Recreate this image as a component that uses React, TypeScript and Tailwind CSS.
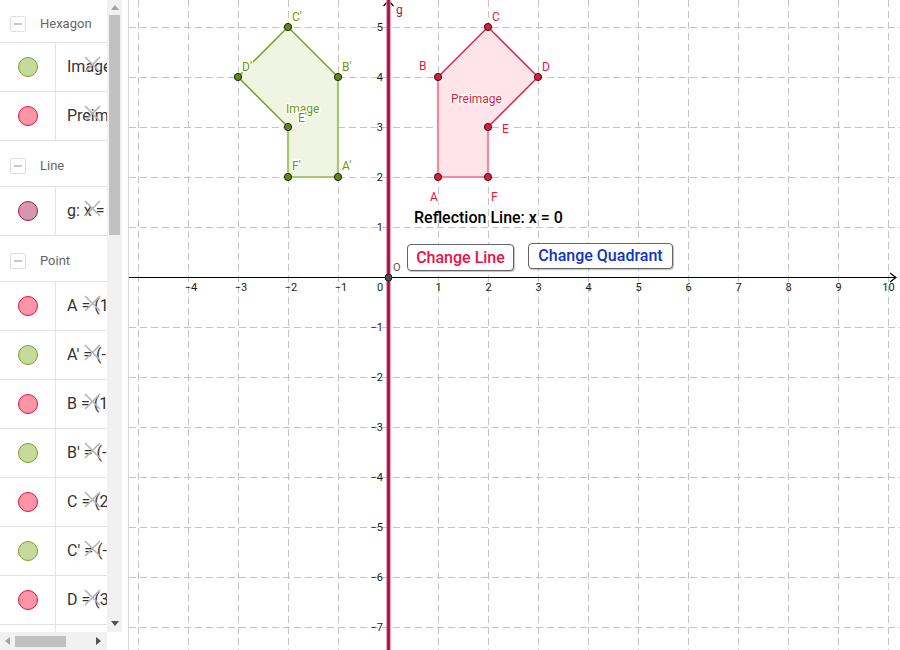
import React from "react";

const U = 50;
const OX = 388;
const OY = 277;
const px = (x: number) => OX + x * U;
const py = (y: number) => OY - y * U;

type Dot = "red" | "green" | "line";

const dotClass: Record<Dot, string> = {
  red: "bg-[#ff95a7] border-[#e3123d]",
  green: "bg-[#c6da9c] border-[#7c9f27]",
  line: "bg-[#d597ad] border-[#a3174c]",
};

const sections: { title: string; first?: boolean; items: { dot: Dot; text: string }[] }[] = [
  {
    title: "Hexagon",
    first: true,
    items: [
      { dot: "green", text: "Image" },
      { dot: "red", text: "Preimage" },
    ],
  },
  { title: "Line", items: [{ dot: "line", text: "g: x = 0" }] },
  {
    title: "Point",
    items: [
      { dot: "red", text: "A = (1, 2)" },
      { dot: "green", text: "A' = (-1, 2)" },
      { dot: "red", text: "B = (1, 4)" },
      { dot: "green", text: "B' = (-1, 4)" },
      { dot: "red", text: "C = (2, 5)" },
      { dot: "green", text: "C' = (-2, 5)" },
      { dot: "red", text: "D = (3, 4)" },
      { dot: "green", text: "D' = (-3, 4)" },
    ],
  },
];

function DeleteCross() {
  return (
    <svg className="absolute left-[84px] top-[13px]" width="17" height="17" viewBox="0 0 17 17">
      <path d="M1 1 L16 16 M16 1 L1 16" stroke="#b4b4b4" strokeWidth="1.6" fill="none" />
    </svg>
  );
}

function AlgebraView() {
  return (
    <div className="flex w-[122px] flex-col">
      <div className="flex min-h-0 flex-1">
        <div className="w-[107px] overflow-hidden">
          {sections.map((s) => (
            <div key={s.title}>
              <div
                className={`flex items-center border-b border-[#e3e3e3] ${s.first ? "h-[43px] pt-[6px]" : "h-[46px] pt-[5px]"}`}
              >
                <div className="ml-[10px] flex h-4 w-4 items-center justify-center rounded-[2px] border border-[#dedede]">
                  <div className="h-[1.5px] w-[8px] bg-[#c8c8c8]" />
                </div>
                <span className="ml-[14px] text-[13px] text-[#666]">{s.title}</span>
              </div>
              {s.items.map((it) => (
                <div key={it.text} className="relative flex h-[49px] border-b border-[#e3e3e3]">
                  <div className="flex w-[56px] shrink-0 items-center justify-center border-r border-[#e3e3e3] pb-[1px]">
                    <div className={`h-5 w-5 rounded-full border ${dotClass[it.dot]}`} />
                  </div>
                  <div className="flex items-center whitespace-nowrap pb-[1px] pl-[11px] text-[16px] text-[#333]">
                    {it.text}
                  </div>
                  <DeleteCross />
                </div>
              ))}
            </div>
          ))}
        </div>
        {/* vertical scrollbar */}
        <div className="flex w-[15px] flex-col items-center bg-[#f1f1f1]">
          <svg className="mt-[5px]" width="8" height="5" viewBox="0 0 8 5">
            <path d="M0 5 L4 0 L8 5 Z" fill="#a3a3a3" />
          </svg>
          <div className="mt-[5px] h-[220px] w-[11px] bg-[#c1c1c1]" />
          <div className="flex-1" />
          <svg className="mb-[6px]" width="8" height="5" viewBox="0 0 8 5">
            <path d="M0 0 L8 0 L4 5 Z" fill="#505050" />
          </svg>
        </div>
      </div>
      {/* horizontal scrollbar */}
      <div className="flex h-[18px]">
        <div className="flex w-[107px] items-center bg-[#f1f1f1]">
          <svg className="ml-[5px]" width="5" height="8" viewBox="0 0 5 8">
            <path d="M5 0 L0 4 L5 8 Z" fill="#a3a3a3" />
          </svg>
          <div className="ml-[5px] h-[11px] w-[51px] bg-[#c1c1c1]" />
          <div className="flex-1" />
          <svg className="mr-[6px]" width="5" height="8" viewBox="0 0 5 8">
            <path d="M0 0 L5 4 L0 8 Z" fill="#505050" />
          </svg>
        </div>
        <div className="flex-1 bg-white" />
      </div>
    </div>
  );
}

const pre = { A: [1, 2], B: [1, 4], C: [2, 5], D: [3, 4], E: [2, 3], F: [2, 2] } as Record<string, number[]>;
const img = { A: [-1, 2], B: [-1, 4], C: [-2, 5], D: [-3, 4], E: [-2, 3], F: [-2, 2] } as Record<string, number[]>;

const P = (p: number[]) => `${px(p[0])},${py(p[1])}`;

function Hexagon({
  pts,
  fill,
  thin,
  thick,
  dot,
}: {
  pts: Record<string, number[]>;
  fill: string;
  thin: string;
  thick: string;
  dot: string;
}) {
  const order = ["A", "B", "C", "D", "E", "F"];
  const seg = (a: string, b: string, c: string, w: number) => (
    <line
      key={a + b}
      x1={px(pts[a][0])}
      y1={py(pts[a][1])}
      x2={px(pts[b][0])}
      y2={py(pts[b][1])}
      stroke={c}
      strokeWidth={w}
    />
  );
  return (
    <g>
      <polygon points={order.map((k) => P(pts[k])).join(" ")} fill={fill} />
      {seg("E", "F", thick, 2.2)}
      {seg("F", "A", thick, 2.2)}
      {seg("A", "B", thick, 2.2)}
      {seg("B", "C", thin, 1.3)}
      {seg("C", "D", thin, 1.3)}
      {seg("D", "E", thin, 1.3)}
      {order.map((k) => (
        <circle key={k} cx={px(pts[k][0])} cy={py(pts[k][1])} r={3.6} fill={dot} stroke="#1c1c1c" strokeWidth={1} />
      ))}
    </g>
  );
}

function Label({ x, y, c, children, size = 12 }: { x: number; y: number; c: string; children: React.ReactNode; size?: number }) {
  return (
    <text
      x={x}
      y={y}
      fill={c}
      fontSize={size}
      fontFamily="Roboto, sans-serif"
      stroke="#ffffff"
      strokeWidth={3}
      strokeLinejoin="round"
      paintOrder="stroke"
    >
      {children}
    </text>
  );
}

function Graphics() {
  const vx = Array.from({ length: 16 }, (_, i) => i - 5);
  const hy = Array.from({ length: 13 }, (_, i) => i - 7);
  const red = "#e8173a";
  const green = "#6b9a06";
  return (
    <div className="relative flex-1 overflow-hidden border-l border-[#d6d6d6] bg-white">
      <svg width="771" height="650" viewBox="129 0 771 650" className="block">
        {vx.map((i) => (
          <line
            key={"v" + i}
            x1={px(i) + 0.5}
            y1={0}
            x2={px(i) + 0.5}
            y2={650}
            stroke="#c4c4c4"
            strokeWidth={1}
            strokeDasharray="7 4"
          />
        ))}
        {hy.map((j) =>
          j === 0 ? null : (
            <line
              key={"h" + j}
              x1={129}
              y1={py(j) + 0.5}
              x2={900}
              y2={py(j) + 0.5}
              stroke="#c4c4c4"
              strokeWidth={1}
              strokeDasharray="7 4"
            />
          )
        )}

        {/* x axis */}
        <line x1={129} y1={277.5} x2={896} y2={277.5} stroke="#000" strokeWidth={1.2} />
        <path d="M890 273 L896 277.5 L890 282" stroke="#000" strokeWidth={1.2} fill="none" />
        {/* y axis arrow */}
        <path d="M383.5 6 L388.5 0.5 L393.5 6" stroke="#000" strokeWidth={1.2} fill="none" />

        {/* tick labels */}
        {vx
          .filter((i) => i >= -4 && i !== 0)
          .map((i) => (
            <text
              key={"tx" + i}
              x={i < 0 ? px(i) + 3 : px(i) + 0.5}
              y={291}
              fontSize={11}
              fontFamily="Roboto, sans-serif"
              fill="#1a1a1a"
              textAnchor="middle"
            >
              {i < 0 ? "\u2212" + -i : i}
            </text>
          ))}
        {hy
          .filter((j) => j !== 0)
          .map((j) => (
            <text
              key={"ty" + j}
              x={383}
              y={py(j) + 4}
              fontSize={11}
              fontFamily="Roboto, sans-serif"
              fill="#1a1a1a"
              textAnchor="end"
            >
              {j < 0 ? "\u2212" + -j : j}
            </text>
          ))}
        <text x={377} y={291} fontSize={11} fontFamily="Roboto, sans-serif" fill="#1a1a1a">
          0
        </text>
        <text x={393} y={271} fontSize={11} fontFamily="Roboto, sans-serif" fill="#555">
          O
        </text>

        {/* preimage and image */}
        <Hexagon pts={pre} fill="#ffe4e9" thin="#e4173e" thick="#f2889c" dot={red} />
        <Hexagon pts={img} fill="#eff4e3" thin="#6f9a16" thick="#a6c66f" dot="#5e8b0a" />

        <Label x={492} y={21} c={red}>C</Label>
        <Label x={419} y={70} c={red}>B</Label>
        <Label x={542} y={71} c={red}>D</Label>
        <Label x={502} y={133} c={red}>E</Label>
        <Label x={430} y={201} c={red}>A</Label>
        <Label x={491} y={201} c={red}>F</Label>
        <Label x={451} y={103} c={red}>Preimage</Label>

        <Label x={292} y={21} c={green}>C'</Label>
        <Label x={342} y={71} c={green}>B'</Label>
        <Label x={242} y={71} c={green}>D'</Label>
        <Label x={286} y={113} c={green}>Image</Label>
        <Label x={298} y={122} c={green}>E'</Label>
        <Label x={292} y={170} c={green}>F'</Label>
        <Label x={342} y={170} c={green}>A'</Label>

        {/* reflection line g */}
        <line x1={388.5} y1={0} x2={388.5} y2={650} stroke="#d9839f" strokeWidth={4.5} />
        <line x1={388.5} y1={0} x2={388.5} y2={650} stroke="#a30b43" strokeWidth={2.5} />
        <text x={396} y={14} fontSize={12} fontFamily="Roboto, sans-serif" fill="#a3174c">
          g
        </text>
        <circle cx={388.5} cy={277.5} r={3.5} fill="#4a4a4a" stroke="#1c1c1c" strokeWidth={1} />
      </svg>

      <div className="absolute left-[285px] top-[208px] whitespace-nowrap text-[16px] font-medium leading-[20px] text-black">
        Reflection Line: x = 0
      </div>
      <div className="absolute left-[278px] top-[244px] flex h-[27px] w-[107px] items-center justify-center rounded-[4px] border-[1.5px] border-[#666] bg-white text-[16px] font-medium text-[#ee1144] shadow-[1px_1px_1px_rgba(0,0,0,0.25)]">
        Change Line
      </div>
      <div className="absolute left-[399px] top-[243px] flex h-[26px] w-[145px] items-center justify-center rounded-[4px] border-[1.5px] border-[#666] bg-white text-[16px] font-medium text-[#1034c8] shadow-[1px_1px_1px_rgba(0,0,0,0.25)]">
        Change Quadrant
      </div>
    </div>
  );
}

export default function App() {
  return (
    <div className="flex h-[650px] w-[900px] overflow-hidden bg-white font-['Roboto',sans-serif]">
      <AlgebraView />
      <div className="w-[6px] bg-white" />
      <Graphics />
    </div>
  );
}
